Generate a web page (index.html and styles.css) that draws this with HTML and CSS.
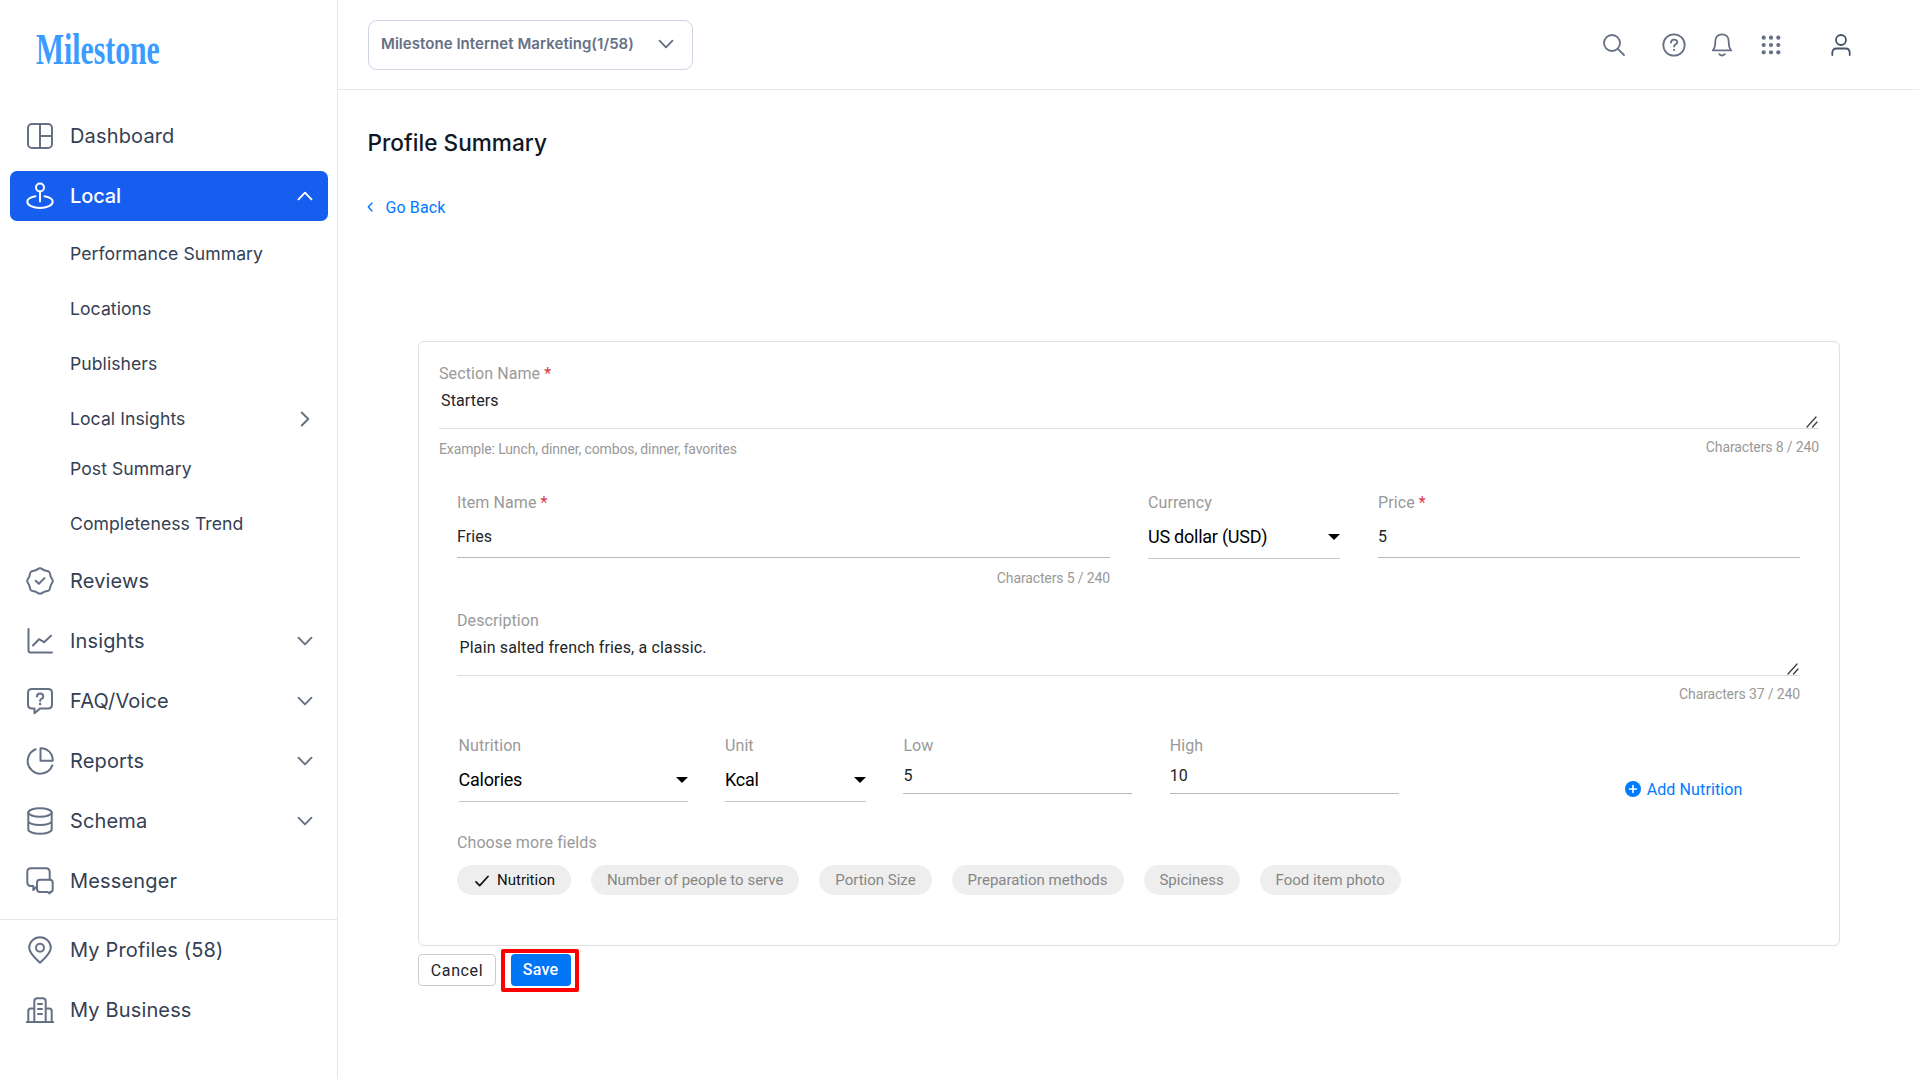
FILE: index.html
```html
<!DOCTYPE html>
<html lang="en">
<head>
<meta charset="utf-8">
<title>Profile Summary</title>
<link rel="stylesheet" href="styles.css">
</head>
<body>
<div class="app">
  <aside class="sidebar">
    <div class="logo"><span class="logo-text">Milestone</span></div>
    <nav class="nav">
      <a class="nav-item">
        <svg class="icon" viewBox="0 0 28 28"><rect x="2" y="2" width="24" height="24" rx="4"/><path d="M14 2v24M14 14h12"/></svg>
        <span>Dashboard</span>
      </a>
      <a class="nav-item active">
        <svg class="icon" viewBox="0 0 28 28"><circle cx="14" cy="5.500" r="4"/><path d="M14 9.500v10M9.500 14.200C4.800 15 1.300 17 1.300 19.800c0 3.500 5.700 6.200 12.700 6.200s12.700-2.700 12.700-6.200c0-2.800-3.500-4.800-8.200-5.600"/></svg>
        <span>Local</span>
        <svg class="chev" viewBox="0 0 16 10"><path d="M1.500 8.300L8 1.700l6.500 6.600"/></svg>
      </a>
      <a class="sub-item"><span>Performance Summary</span></a>
      <a class="sub-item"><span>Locations</span></a>
      <a class="sub-item"><span>Publishers</span></a>
      <a class="sub-item has-children"><span>Local Insights</span>
        <svg class="chev-right" viewBox="0 0 10 16"><path d="M1.700 1.500L8.300 8l-6.600 6.500"/></svg>
      </a>
      <a class="sub-item"><span>Post Summary</span></a>
      <a class="sub-item"><span>Completeness Trend</span></a>
      <a class="nav-item">
        <svg class="icon" viewBox="0 0 28 28"><path d="M14 1.200c1.800 0 2.800 1.500 4.400 2.100 1.700.6 3.400.3 4.700 1.600s1 3 1.600 4.700c.6 1.600 2.100 2.600 2.100 4.400s-1.500 2.800-2.100 4.400c-.6 1.700-.3 3.400-1.600 4.700s-3 1-4.700 1.600c-1.600.6-2.600 2.100-4.400 2.100s-2.800-1.500-4.400-2.100c-1.700-.6-3.400-.3-4.700-1.600s-1-3-1.600-4.700C2.700 16.800 1.200 15.800 1.200 14s1.500-2.800 2.100-4.400c.6-1.700.3-3.400 1.600-4.700s3-1 4.700-1.600C11.200 2.700 12.200 1.200 14 1.200z"/><path d="M9.700 13.800l3.200 3 5.600-5.700"/></svg>
        <span>Reviews</span>
      </a>
      <a class="nav-item">
        <svg class="icon" viewBox="0 0 28 28"><path d="M2.500 2v21.500q0 2 2 2H26M7 18.500l6-6.300 5 3L25 8.700"/></svg>
        <span>Insights</span>
        <svg class="chev" viewBox="0 0 16 10"><path d="M1.500 1.700L8 8.300l6.500-6.600"/></svg>
      </a>
      <a class="nav-item">
        <svg class="icon" viewBox="0 0 28 28"><path d="M6 2h16q4 0 4 4v11.500q0 4-4 4h-8l-5.500 4.800v-4.800H6q-4 0-4-4V6q0-4 4-4z"/><path d="M10.900 9.600q.2-3 3.200-3t3.200 2.900q0 1.700-1.900 2.400-1.300.6-1.300 2"/><circle class="dot" cx="14.100" cy="17" r="1.300"/></svg>
        <span>FAQ/Voice</span>
        <svg class="chev" viewBox="0 0 16 10"><path d="M1.500 1.700L8 8.300l6.500-6.600"/></svg>
      </a>
      <a class="nav-item">
        <svg class="icon" viewBox="0 0 28 28"><path d="M9.600 2.200A12.700 12.700 0 1 0 26.300 18.400"/><path d="M14.500 1.300h1.500A11.500 11.500 0 0 1 26.700 12v1.700H14.500z"/></svg>
        <span>Reports</span>
        <svg class="chev" viewBox="0 0 16 10"><path d="M1.500 1.700L8 8.300l6.500-6.600"/></svg>
      </a>
      <a class="nav-item">
        <svg class="icon" viewBox="0 0 28 28"><ellipse cx="14" cy="5.500" rx="11.700" ry="4.200"/><path d="M2.300 5.500v17c0 2.300 5.200 4.200 11.700 4.200s11.700-1.900 11.700-4.200v-17M2.300 14c0 2.300 5.200 4 11.700 4s11.700-1.700 11.700-4"/></svg>
        <span>Schema</span>
        <svg class="chev" viewBox="0 0 16 10"><path d="M1.500 1.700L8 8.300l6.500-6.600"/></svg>
      </a>
      <a class="nav-item">
        <svg class="icon" viewBox="0 0 28 28"><path d="M10.800 19.500L7.300 23v-4H5q-3.700 0-3.700-3.700V5Q1.300 1.300 5 1.300h15q3.700 0 3.700 3.700v7.500"/><path d="M14 12.800h9.700q3 0 3 3v6.500q0 3-3 3V26.500l-2.400-1.600H14q-3 0-3-3v-6.100q0-3 3-3z"/></svg>
        <span>Messenger</span>
      </a>
    </nav>
    <nav class="nav nav-bottom">
      <a class="nav-item">
        <svg class="icon" viewBox="0 0 28 28"><path d="M14 26.700C10 23 3.200 17.500 3.200 11.800a10.800 10.500 0 0 1 21.600 0C24.800 17.500 18 23 14 26.700z"/><circle cx="14" cy="11.700" r="4"/></svg>
        <span>My Profiles (58)</span>
      </a>
      <a class="nav-item">
        <svg class="icon" viewBox="0 0 28 28"><path d="M.8 26h26.400M8.300 26V5.500q0-3.200 3.200-3.200h5q3.200 0 3.200 3.200V26M2.300 26V15q0-2.500 2.500-2.500h3.500M19.700 12.500h3.500q2.500 0 2.500 2.500v11M12 8h4M12 13h4M12 18h4"/></svg>
        <span>My Business</span>
      </a>
    </nav>
  </aside>

  <main class="main">
    <header class="topbar">
      <div class="account-select"><span>Milestone Internet Marketing(1/58)</span>
        <svg class="chev" viewBox="0 0 16 10"><path d="M1.500 1.700L8 8.300l6.500-6.600"/></svg>
      </div>
      <div class="tools">
        <svg class="tool search" viewBox="0 0 24 24"><circle cx="10" cy="10" r="8"/><path d="M15.800 15.800l6.200 6.200"/></svg>
        <svg class="tool help" viewBox="0 0 24 24"><circle cx="12" cy="12" r="10.700"/><path d="M8.900 9.600q.2-3 3.200-3t3.200 2.700q0 1.500-1.900 2.300-1.300.6-1.300 1.900"/><circle class="dot" cx="12.100" cy="17" r="1.100"/></svg>
        <svg class="tool bell" viewBox="0 0 24 24"><path d="M2.800 17.300C4.700 15.500 5.300 13 5.300 8.500 5.300 4 8 1.300 12 1.300s6.700 2.700 6.700 7.200c0 4.500.6 7 2.500 8.800zM9.200 21.200q2.800 2.500 5.600 0"/></svg>
        <svg class="tool grid" viewBox="0 0 24 24"><g class="dot"><circle cx="4.700" cy="4.700" r="2.100"/><circle cx="12" cy="4.700" r="2.100"/><circle cx="19.300" cy="4.700" r="2.100"/><circle cx="4.700" cy="12" r="2.100"/><circle cx="12" cy="12" r="2.100"/><circle cx="19.300" cy="12" r="2.100"/><circle cx="4.700" cy="19.300" r="2.100"/><circle cx="12" cy="19.300" r="2.100"/><circle cx="19.300" cy="19.300" r="2.100"/></g></svg>
        <svg class="tool user" viewBox="0 0 24 24"><circle cx="12" cy="7" r="5"/><path d="M3.300 22v-2.200q0-4.300 4.300-4.300h8.800q4.300 0 4.300 4.300v2.200"/></svg>
      </div>
    </header>

    <section class="content">
      <h1 class="title">Profile Summary</h1>
      <a class="back"><svg class="back-chev" viewBox="0 0 6 10"><path d="M5 1L1.300 5 5 9"/></svg><span>Go Back</span></a>

      <form class="card">
        <div class="field">
          <label>Section Name <b>*</b></label>
          <div class="textarea section-text"><span>Starters</span>
            <svg class="grip" viewBox="0 0 12 12"><path d="M1 11L10 1M6.500 11L11 6"/></svg>
          </div>
          <div class="notes"><span class="hint">Example: Lunch, dinner, combos, dinner, favorites</span><span class="count">Characters 8 / 240</span></div>
        </div>

        <div class="item">
          <div class="row item-row">
            <div class="field">
              <label>Item Name <b>*</b></label>
              <div class="input">Fries</div>
              <div class="count item-count">Characters 5 / 240</div>
            </div>
            <div class="field">
              <label>Currency</label>
              <div class="select currency"><span>US dollar (USD)</span><i class="caret"></i></div>
            </div>
            <div class="field">
              <label>Price <b>*</b></label>
              <div class="input">5</div>
            </div>
          </div>

          <div class="field description">
            <label>Description</label>
            <div class="textarea desc-text"><span>Plain salted french fries, a classic.</span>
              <svg class="grip" viewBox="0 0 12 12"><path d="M1 11L10 1M6.500 11L11 6"/></svg>
            </div>
            <div class="count desc-count">Characters 37 / 240</div>
          </div>

          <div class="row nutrition-row">
            <div class="field">
              <label>Nutrition</label>
              <div class="select"><span>Calories</span><i class="caret"></i></div>
            </div>
            <div class="field">
              <label>Unit</label>
              <div class="select"><span>Kcal</span><i class="caret"></i></div>
            </div>
            <div class="field">
              <label>Low</label>
              <div class="input short">5</div>
            </div>
            <div class="field">
              <label>High</label>
              <div class="input short">10</div>
            </div>
            <a class="add"><svg class="plus" viewBox="0 0 16 16"><circle cx="8" cy="8" r="8"/><path d="M8 4.500v7M4.500 8h7"/></svg><span>Add Nutrition</span></a>
          </div>

          <label class="more">Choose more fields</label>
          <div class="chips">
            <div class="chip selected"><svg class="check" viewBox="0 0 14 12"><path d="M1 6.800l3.700 3.800L13 1.500"/></svg><span>Nutrition</span></div>
            <div class="chip">Number of people to serve</div>
            <div class="chip">Portion Size</div>
            <div class="chip">Preparation methods</div>
            <div class="chip">Spiciness</div>
            <div class="chip">Food item photo</div>
          </div>
        </div>
      </form>

      <div class="actions">
        <div class="btn cancel">Cancel</div>
        <div class="highlight"><div class="btn save">Save</div></div>
      </div>
    </section>
  </main>
</div>
</body>
</html>
```
FILE: styles.css
```css
* { box-sizing: border-box; }

body {
  margin: 0;
  background: #fff;
  font-family: Roboto, "Liberation Sans", sans-serif;
  font-size: 16px;
  color: #212529;
}

svg {
  display: block;
  flex: none;
  fill: none;
  stroke: currentColor;
  stroke-linecap: round;
  stroke-linejoin: round;
}

.dot { fill: currentColor; stroke: none; }

.app { display: flex; width: 1919px; height: 1079px; overflow: hidden; }

/* Sidebar */
.sidebar {
  flex: none;
  width: 338px;
  border-right: 1px solid #e4e6ea;
  font-family: Inter, "Liberation Sans", sans-serif;
}

.logo { height: 111px; padding: 23px 0 0 36px; }

.logo-text {
  display: inline-block;
  font: 700 45px/52px "Liberation Serif", serif;
  color: #3b9cff;
  transform: scaleX(.66);
  transform-origin: 0 0;
}

.nav { display: flex; flex-direction: column; gap: 10px; }

.nav-item, .sub-item {
  display: flex;
  align-items: center;
  margin: 0 9px 0 10px;
  padding: 0 15px 0 16px;
  color: #344054;
}

.nav-item { height: 50px; gap: 16px; border-radius: 7px; font-size: 20px; letter-spacing: .15px; }
.sub-item { height: 45px; padding-left: 60px; font-size: 17.6px; letter-spacing: .06px; }
.has-children { margin-bottom: -5px; }

.icon { width: 28px; height: 28px; color: #667085; stroke-width: 2; }
.chev { width: 16px; height: 10px; margin-left: auto; color: #667085; stroke-width: 1.9; }
.chev-right { width: 10px; height: 16px; margin: 0 3px 0 auto; color: #667085; stroke-width: 1.9; }

.active { background: #155eef; color: #fff; font-weight: 500; letter-spacing: -.1px; }
.active .icon, .active .chev { color: #fff; }

.nav-bottom { margin-top: 13px; padding-top: 5px; border-top: 1px solid #e4e6ea; }

/* Top bar */
.main { flex: 1; min-width: 0; }

.topbar {
  display: flex;
  justify-content: space-between;
  height: 90px;
  padding: 20px 66.5px 0 30px;
  border-bottom: 1px solid #e6e8ec;
}

.account-select {
  display: flex;
  align-items: center;
  width: 325px;
  height: 50px;
  padding: 0 18px 3px 12px;
  border: 1px solid #cfd3e2;
  border-radius: 9px;
  font: 600 15px Inter, "Liberation Sans", sans-serif;
  letter-spacing: .05px;
  color: #667085;
}

.tools { display: flex; height: 49px; align-items: center; color: #667085; }
.tool { width: 24px; height: 24px; stroke-width: 1.8; }
.help { margin-left: 36px; }
.bell { margin-left: 24px; }
.grid { margin-left: 25px; }
.user { margin-left: 46px; color: #475467; }

/* Page content */
.content { padding: 35px 79px 0 80px; }

.title {
  margin: 0 0 0 -50.500px;
  font: 500 22.6px/36px Inter, "Liberation Sans", sans-serif;
  letter-spacing: .03px;
  color: #101828;
}

.back {
  display: flex;
  align-items: center;
  gap: 12.5px;
  height: 24px;
  margin: 34px 0 122px -51px;
  font-weight: 380;
  letter-spacing: .12px;
  color: #007bff;
}
.back-chev { width: 6px; height: 10px; stroke-width: 1.4; }

.card {
  height: 605px;
  padding: 20px 20px 0;
  border: 1px solid #dee0e4;
  border-radius: 6px;
}

label { display: block; height: 24px; line-height: 24px; letter-spacing: .09px; color: #999; }
label b { font-weight: 400; color: #dc3545; }

.textarea {
  display: flex;
  justify-content: space-between;
  align-items: flex-end;
  height: 43px;
  padding: 0 1px 0 2px;
  border-bottom: 1px solid #dcdee4;
  font-weight: 385;
  letter-spacing: .13px;
}
.textarea span { align-self: flex-start; line-height: 30px; }
.grip { width: 12px; height: 12px; stroke-width: 1.4; color: #444; }

.notes { display: flex; justify-content: space-between; height: 62px; line-height: 36px; }
.hint { padding-top: 2px; }
.hint, .count { font-size: 14px; letter-spacing: -.13px; color: #999; }
.count { text-align: right; }

.item { padding: 0 19px 0 18px; }
.row { display: grid; }
.item-row { grid-template-columns: 653px 192px 422px; column-gap: 38px; height: 118px; }

.input { height: 43px; line-height: 43px; border-bottom: 1px solid #b9b9b9; font-weight: 385; letter-spacing: .08px; }
.input.short { height: 36px; line-height: 36px; }
.item-count { line-height: 41px; }

.select {
  display: flex;
  align-items: center;
  justify-content: space-between;
  height: 44px;
  border-bottom: 1px solid #c6c6c6;
  font-size: 18px;
  font-weight: 380;
  letter-spacing: -.24px;
  color: #000;
}
.currency span { padding-bottom: 1px; }
.caret { border: 6.5px solid transparent; border-top-color: #000; border-bottom: 0; }

.description { height: 125px; }
.desc-text { border-color: #ddd; padding-left: 2.5px; }
.desc-text span { line-height: 30px; letter-spacing: .15px; }
.desc-count { line-height: 37px; }

.nutrition-row {
  grid-template-columns: 229px 141px 229px 229px 1fr;
  column-gap: 37.4px;
  height: 97px;
  padding-left: 1.6px;
}

.add {
  display: flex;
  align-items: center;
  gap: 6px;
  height: 24px;
  margin: 43px 0 0 188.5px;
  font-weight: 380;
  letter-spacing: .12px;
  color: #007bff;
}
.plus { width: 16px; height: 16px; }
.plus circle { fill: #007bff; stroke: none; }
.plus path { stroke: #fff; stroke-width: 1.6; }

.chips { display: flex; gap: 20px; padding-top: 10px; }
.chip {
  display: flex;
  align-items: center;
  height: 30px;
  padding: 0 15.95px;
  border-radius: 15px;
  background: #eee;
  font-size: 15px;
  color: #868686;
}
.chip.selected { gap: 8px; padding-left: 18px; font-weight: 370; color: #111; }
.check { width: 14px; height: 12px; margin-top: 2px; stroke-width: 1.7; }

.actions { display: flex; gap: 5px; padding-top: 3px; }
.btn {
  display: flex;
  align-items: center;
  justify-content: center;
  height: 32px;
  border-radius: 4px;
  font-size: 16px;
  font-weight: 500;
}
.cancel { width: 78px; margin-top: 5px; border: 1px solid #ccc; font-weight: 450; letter-spacing: .6px; }
.highlight { width: 78px; height: 43px; padding: 1px 0 0 6px; border: 4px solid #f00; border-radius: 2px; }
.save { width: 60px; padding: 0 1px 1.5px 0; background: #0075f6; color: #fff; letter-spacing: .2px; }
```
